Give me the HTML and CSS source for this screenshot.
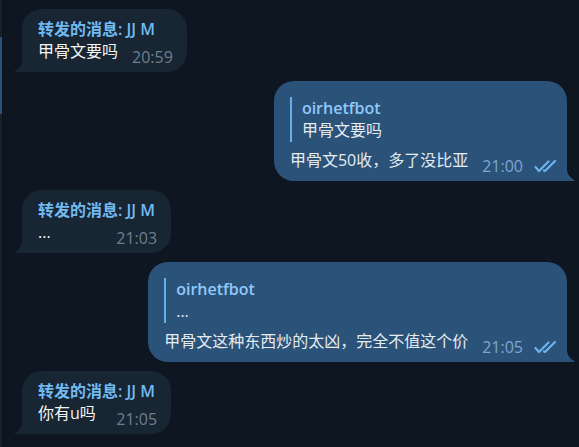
FILE: index.html
```html
<!DOCTYPE html>
<html lang="zh-CN">
<head>
<meta charset="utf-8">
<title>JJ M</title>
<link rel="stylesheet" href="styles.css">
</head>
<body>
<svg class="defs" aria-hidden="true">
  <symbol id="ticks" viewBox="0 0 22 14">
    <path d="M1.500 8 5 12 14.500 2.500M10 11.500 11 12 21 2" fill="none" stroke="currentColor" stroke-width="2.2" stroke-linecap="round" stroke-linejoin="round"/>
  </symbol>
  <symbol id="tail" viewBox="0 0 8 20">
    <path d="M8 0V20H0.500Q0 19 1.500 18.500Q7.500 15 8 9Z" fill="currentColor"/>
  </symbol>
</svg>
<div class="chat">
  <aside class="rail"><div class="active"></div></aside>
  <main class="messages">
    <article class="bubble in">
      <header class="forward">转发的消息: JJ M</header>
      <div class="row"><p class="text">甲骨文要吗</p><time class="time">20:59</time></div>
      <svg class="tail"><use href="#tail"/></svg>
    </article>
    <article class="bubble out">
      <blockquote class="quote"><cite class="author">oirhetfbot</cite><p>甲骨文要吗</p></blockquote>
      <div class="row"><p class="text">甲骨文50收，多了没比亚</p><time class="time">21:00</time><svg class="ticks"><use href="#ticks"/></svg></div>
      <svg class="tail"><use href="#tail"/></svg>
    </article>
    <article class="bubble in">
      <header class="forward">转发的消息: JJ M</header>
      <div class="row"><p class="text">...</p><time class="time">21:03</time></div>
      <svg class="tail"><use href="#tail"/></svg>
    </article>
    <article class="bubble out">
      <blockquote class="quote"><cite class="author">oirhetfbot</cite><p>...</p></blockquote>
      <div class="row"><p class="text">甲骨文这种东西炒的太凶，完全不值这个价</p><time class="time">21:05</time><svg class="ticks"><use href="#ticks"/></svg></div>
      <svg class="tail"><use href="#tail"/></svg>
    </article>
    <article class="bubble in">
      <header class="forward">转发的消息: JJ M</header>
      <div class="row"><p class="text">你有u吗</p><time class="time">21:05</time></div>
      <svg class="tail"><use href="#tail"/></svg>
    </article>
  </main>
</div>
</body>
</html>
```
FILE: styles.css
```css
* {
  box-sizing: border-box;
}

body {
  margin: 0;
  background: #0e1621;
  color: #f5f5f5;
  font: 16px/22px "Open Sans", "Noto Sans CJK SC", sans-serif;
}

p,
blockquote {
  margin: 0;
}

.defs {
  position: absolute;
  width: 0;
  height: 0;
}

.chat {
  display: flex;
  min-height: 100vh;
}

.rail {
  flex: none;
  width: 3px;
  padding-top: 37px;
  background: #17212b;
  border-right: 1px solid #0a121b;
}

.active {
  height: 77px;
  background: #2b5278;
}

.messages {
  flex: 1;
  display: flex;
  flex-direction: column;
  gap: 9px;
  padding: 9px 12px 9px 19px;
}

.bubble {
  position: relative;
  border-radius: 20px;
}

.in {
  align-self: flex-start;
  padding: 9px 14px 4px 16px;
  background: #182533;
  border-bottom-left-radius: 0;
}

.out {
  align-self: flex-end;
  padding: 16px 11px 4px 16px;
  background: #2b5278;
  border-bottom-right-radius: 0;
  color: #e4ecf2;
}

.forward {
  padding-right: 2px;
  color: #71baf2;
  font-weight: 600;
}

.row {
  display: flex;
  align-items: flex-end;
}

.text {
  flex: 1;
  padding-bottom: 6px;
}

.time {
  margin-left: 14px;
  color: #6d7f8f;
}

.out .time {
  color: #7da8d3;
}

.ticks {
  width: 22px;
  height: 14px;
  margin: 0 0 4px 11px;
  color: #6ab4f0;
}

.quote {
  margin-bottom: 7px;
  padding: 0 0 1px 10px;
  border-left: 2px solid #65b0ea;
}

.author {
  display: block;
  color: #8fc8fa;
  font-style: normal;
  font-weight: 600;
}

.tail {
  position: absolute;
  bottom: 0;
  width: 8px;
  height: 20px;
}

.in .tail {
  right: 100%;
  color: #182533;
}

.out .tail {
  left: 100%;
  color: #2b5278;
  transform: scaleX(-1);
}
```
